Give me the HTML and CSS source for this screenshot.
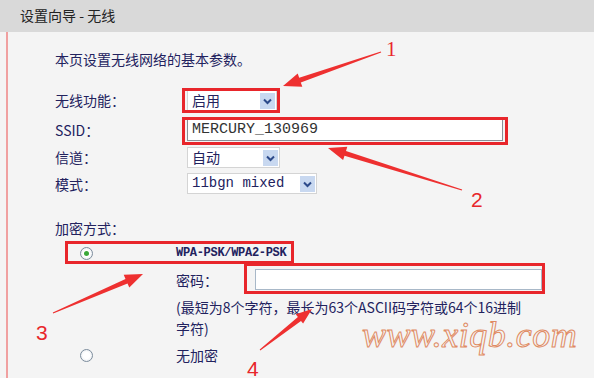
FILE: index.html
```html
<!DOCTYPE html>
<html lang="zh-CN">

<head>
    <meta charset="UTF-8">
    <title>设置向导 - 无线</title>
    <link rel="stylesheet" href="styles.css">
</head>

<body>
    <div class="page">
        <div class="header">设置向导 - 无线</div>

        <div class="panel">
            <p class="intro">本页设置无线网络的基本参数。</p>

            <!-- Basic wireless settings -->
            <div class="row row-enable">
                <span class="label">无线功能：</span>
                <div class="select select-enable"><span class="value">启用</span><span class="arrow"></span></div>
            </div>
            <div class="row row-ssid">
                <span class="label">SSID：</span>
                <div class="text-input ssid-input mono">MERCURY_130969</div>
            </div>
            <div class="row row-channel">
                <span class="label">信道：</span>
                <div class="select select-channel"><span class="value">自动</span><span class="arrow"></span></div>
            </div>
            <div class="row row-mode">
                <span class="label">模式：</span>
                <div class="select select-mode"><span class="value mono">11bgn mixed</span><span class="arrow"></span></div>
            </div>

            <!-- Security -->
            <p class="section-title">加密方式：</p>
            <div class="option option-wpa">
                <span class="radio checked"></span>
                <span class="option-name mono-small">WPA-PSK/WPA2-PSK</span>
            </div>
            <div class="password-row">
                <span class="pwd-label">密码：</span>
                <div class="text-input pwd-input"></div>
            </div>
            <p class="hint">(最短为8个字符，最长为63个ASCII码字符或64个16进制<br>字符)</p>
            <div class="option option-none">
                <span class="radio"></span>
                <span class="option-name">无加密</span>
            </div>
        </div>

        <div class="watermark">www.xiqb.com</div>

        <!-- Red annotation marks drawn over the screenshot -->
        <svg class="marks" width="594" height="378" viewBox="0 0 594 378">
            <g class="boxes">
                <rect x="183.5" y="89.5" width="95" height="22" />
                <rect x="183.5" y="118.5" width="323" height="25" />
                <rect x="66.5" y="242.5" width="226" height="20" />
                <rect x="245.5" y="264.5" width="298" height="28" />
            </g>
            <g class="arrows">
                <polygon points="380.8,51.5 299.2,77.7 297.7,73.5 283,86 302.3,86.7 300.8,82.5 381.2,52.5" />
                <polygon points="462.2,189.5 346,151 347.3,146.7 328,148 343.1,160.1 344.5,155.8 461.8,190.5" />
                <polygon points="53.2,313.5 127.5,283.5 129.3,287.6 143,274 123.7,274.8 125.5,278.9 52.8,312.5" />
                <polygon points="260.3,350.4 301,320.9 303.1,323.6 312,309 295.7,314.2 297.9,316.9 259.7,349.6" />
            </g>
            <g class="numbers">
                <text x="386" y="56" class="serif">1</text>
                <text x="471" y="207">2</text>
                <text x="36" y="340">3</text>
                <text x="247" y="376">4</text>
            </g>
        </svg>
    </div>
</body>

</html>
```

FILE: styles.css
```css
body {
    margin: 0;
    background-color: #f4f4f4;
    font-family: "Noto Sans CJK SC", "Liberation Sans", sans-serif;
    font-size: 14px;
    color: #22225e;
}

.page {
    position: relative;
    width: 594px;
    height: 378px;
    overflow: hidden;
}

.header {
    height: 32px;
    line-height: 30px;
    padding-left: 20px;
    background-color: #d9d9d9;
    color: #222;
}

.panel {
    margin-left: 6px;
    border-left: 2px solid #f0a0a0;
    padding: 17px 0 20px 47px;
    min-height: 330px;
}

p {
    margin: 0;
}

.intro {
    line-height: 20px;
}

.mono {
    font-family: "Liberation Mono", monospace;
}

.mono-small {
    font-family: "Liberation Mono", monospace;
    font-size: 12px;
    font-weight: bold;
    letter-spacing: -0.3px;
}

/* basic settings rows */
.row {
    display: flex;
    align-items: center;
    height: 26px;
}

.row-enable {
    margin-top: 18px;
}

.row-ssid {
    margin-top: 4px;
}

.row-channel,
.row-mode {
    margin-top: 1px;
}

.row-mode {
    height: 25px;
}

.label {
    width: 132px;
    flex: none;
}

.select {
    display: flex;
    align-items: flex-end;
    justify-content: space-between;
    height: 21px;
    box-sizing: border-box;
    border: 1px solid #d4d4d4;
    background: #fff;
    padding: 0 1px 1px 4px;
}

.select .value {
    align-self: center;
    line-height: 18px;
}

.select-enable {
    width: 90px;
}

.select-channel {
    width: 93px;
}

.select-mode {
    width: 130px;
}

.arrow {
    width: 15px;
    height: 16px;
    flex: none;
    background-color: #c8d8f0;
    background-image: url("data:image/svg+xml,%3Csvg xmlns='http://www.w3.org/2000/svg' width='15' height='16'%3E%3Cpath d='M4 6.5l3.5 3.5 3.5-3.5' fill='none' stroke='%232c4a8a' stroke-width='2'/%3E%3C/svg%3E");
}

.text-input {
    box-sizing: border-box;
    height: 22px;
    background: #fff;
    border: 1px solid #8a9098;
}

.ssid-input {
    width: 316px;
    padding-left: 4px;
    font-size: 15px;
    line-height: 20px;
    color: #333;
}

/* security */
.section-title {
    margin-top: 22px;
    line-height: 20px;
}

.option {
    display: flex;
    align-items: center;
    height: 20px;
}

.option-wpa {
    margin-top: 5px;
}

.option-none {
    margin-top: 6px;
}

.radio {
    box-sizing: border-box;
    width: 13px;
    height: 13px;
    margin-left: 25px;
    margin-right: 83px;
    border: 1px solid #7c8c9c;
    border-radius: 50%;
    background: radial-gradient(circle, #fff 40%, #dfe4ea 100%);
    display: flex;
    align-items: center;
    justify-content: center;
}

.radio.checked::after {
    content: "";
    width: 5px;
    height: 5px;
    border-radius: 50%;
    background: #3aa83a;
}

.password-row {
    display: flex;
    align-items: center;
    margin-top: 6px;
    padding-left: 121px;
}

.pwd-label {
    width: 79px;
}

.pwd-input {
    width: 287px;
    height: 21px;
    border-color: #a8b8c8;
}

.hint {
    margin-top: 7px;
    padding-left: 121px;
    line-height: 21px;
}

/* overlays */
.watermark {
    position: absolute;
    left: 362px;
    top: 314px;
    font-family: "Liberation Serif", serif;
    font-style: italic;
    font-size: 36px;
    letter-spacing: 0.5px;
    color: transparent;
    -webkit-text-stroke: 1px #e08a62;
}

.marks {
    position: absolute;
    left: 0;
    top: 0;
    pointer-events: none;
}

.boxes rect {
    fill: none;
    stroke: #e8262b;
    stroke-width: 3;
}

.arrows polygon {
    fill: #ee3030;
}

.numbers text {
    fill: #e8262b;
    font-family: "Liberation Sans", sans-serif;
    font-size: 21px;
}

.numbers .serif {
    font-family: "Liberation Serif", serif;
}
```
